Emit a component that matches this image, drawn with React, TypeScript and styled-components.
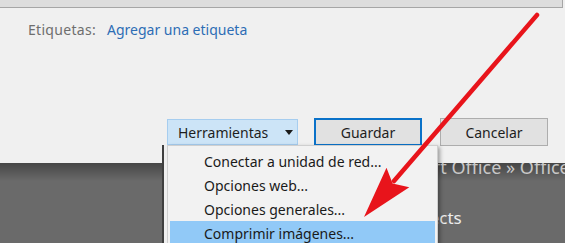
import styled, { createGlobalStyle } from 'styled-components'

const GlobalStyle = createGlobalStyle`
	html, body {
		margin: 0;
		padding: 0;
		background: #6b6b6b;
	}
	* {
		box-sizing: border-box;
	}
`

const UI_FONT = `"Noto Sans", "Open Sans", Arial, sans-serif`

const Page = styled.div`
	position: relative;
	width: 565px;
	height: 243px;
	overflow: hidden;
	font-family: ${UI_FONT};
	background: #6b6b6b;
`
const Dialog = styled.div`
	position: relative;
	z-index: 1;
	height: 163px;
	display: flex;
	flex-direction: column;
	background: #f0f0f0;
`
const FieldStrip = styled.div`
	height: 8px;
	margin-right: 2px;
	background: #dddddd;
	border-bottom: 1px solid #a6a6a6;
	border-right: 1px solid #a6a6a6;
`
const TagsRow = styled.div`
	display: flex;
	align-items: center;
	gap: 11px;
	margin-top: 12px;
	padding-left: 28px;
	font-size: 14px;
	line-height: 20px;
`
const TagsLabel = styled.span`
	color: #6e6e6e;
	letter-spacing: 0.3px;
`
const TagsLink = styled.span`
	color: #2d6db5;
`
const ButtonsRow = styled.div`
	display: flex;
	align-items: center;
	margin-top: auto;
	margin-bottom: 17px;
	padding-left: 167px;
`
const ToolsWrap = styled.div`
	position: relative;
`
const ToolsButton = styled.div`
	display: flex;
	align-items: center;
	justify-content: space-between;
	width: 131px;
	height: 26px;
	padding: 0 4px 0 10px;
	background: #cce4f7;
	border: 1px solid #a6cdef;
	color: #1e1e1e;
	font-size: 14px;
`
const Caret = styled.span`
	width: 0;
	height: 0;
	border-left: 4px solid transparent;
	border-right: 4px solid transparent;
	border-top: 5px solid #1a1a1a;
`
const DialogButton = styled.div<{ $primary?: boolean; $gap: number; $width: number }>`
	display: flex;
	align-items: center;
	justify-content: center;
	margin-left: ${p => p.$gap}px;
	width: ${p => p.$width}px;
	height: 28px;
	background: #e1e1e1;
	border: ${p => (p.$primary ? '2px solid #0a72c9' : '1px solid #adadad')};
	color: #1e1e1e;
	font-size: 14px;
`
const Menu = styled.div`
	position: absolute;
	top: 100%;
	left: 0;
	width: 271px;
	padding: 3px 2px 0;
	background: #f2f2f2;
	border: 1px solid #cfcfcf;
	box-shadow: -3px 0 0 #efefef, -5px 0 0 #3f3f3f, 2px 2px 4px rgba(0, 0, 0, 0.35);
`
const MenuItem = styled.div<{ $active?: boolean }>`
	height: 24px;
	display: flex;
	align-items: center;
	padding-left: 34px;
	font-size: 14px;
	color: #1a1a1a;
	background: ${p => (p.$active ? '#91c9f7' : 'transparent')};
`
const Backdrop = styled.div`
	height: 80px;
	display: flex;
	flex-direction: column;
	background: linear-gradient(#464646, #6a6a6a 18px);
	font-family: ${UI_FONT};
`
const Breadcrumb = styled.div`
	margin-top: -8px;
	padding-left: 367px;
	font-size: 18px;
	line-height: 24px;
	color: #c8c8c8;
	white-space: nowrap;
`
const FolderName = styled.div`
	margin-top: 28px;
	padding-left: 398px;
	font-size: 17px;
	line-height: 22px;
	color: #ececec;
	white-space: nowrap;
`
const Overlay = styled.svg`
	position: absolute;
	left: 0;
	top: 0;
	z-index: 5;
	pointer-events: none;
`

const menuItems = [
	'Conectar a unidad de red...',
	'Opciones web...',
	'Opciones generales...',
	'Comprimir imágenes...',
]

export default function App() {
	return (
		<Page>
			<GlobalStyle />
			<Dialog>
				<FieldStrip />
				<TagsRow>
					<TagsLabel>Etiquetas:</TagsLabel>
					<TagsLink>Agregar una etiqueta</TagsLink>
				</TagsRow>
				<ButtonsRow>
					<ToolsWrap>
						<ToolsButton>
							Herramientas
							<Caret />
						</ToolsButton>
						<Menu>
							{menuItems.map((item, i) => (
								<MenuItem key={item} $active={i === menuItems.length - 1}>
									{item}
								</MenuItem>
							))}
						</Menu>
					</ToolsWrap>
					<DialogButton $primary $gap={16} $width={108}>Guardar</DialogButton>
					<DialogButton $gap={18} $width={108}>Cancelar</DialogButton>
				</ButtonsRow>
			</Dialog>
			<Backdrop>
				<Breadcrumb>Microsoft Office » Office16</Breadcrumb>
				<FolderName>Projects</FolderName>
			</Backdrop>
			<Overlay width="565" height="243" viewBox="0 0 565 243">
				<line x1="537" y1="15" x2="394" y2="181" stroke="#e8141b" strokeWidth="4.5" strokeLinecap="round" />
				<polygon points="364,217 386.5,167.7 392.6,183.6 409.3,187.3" fill="#e8141b" />
			</Overlay>
		</Page>
	)
}
